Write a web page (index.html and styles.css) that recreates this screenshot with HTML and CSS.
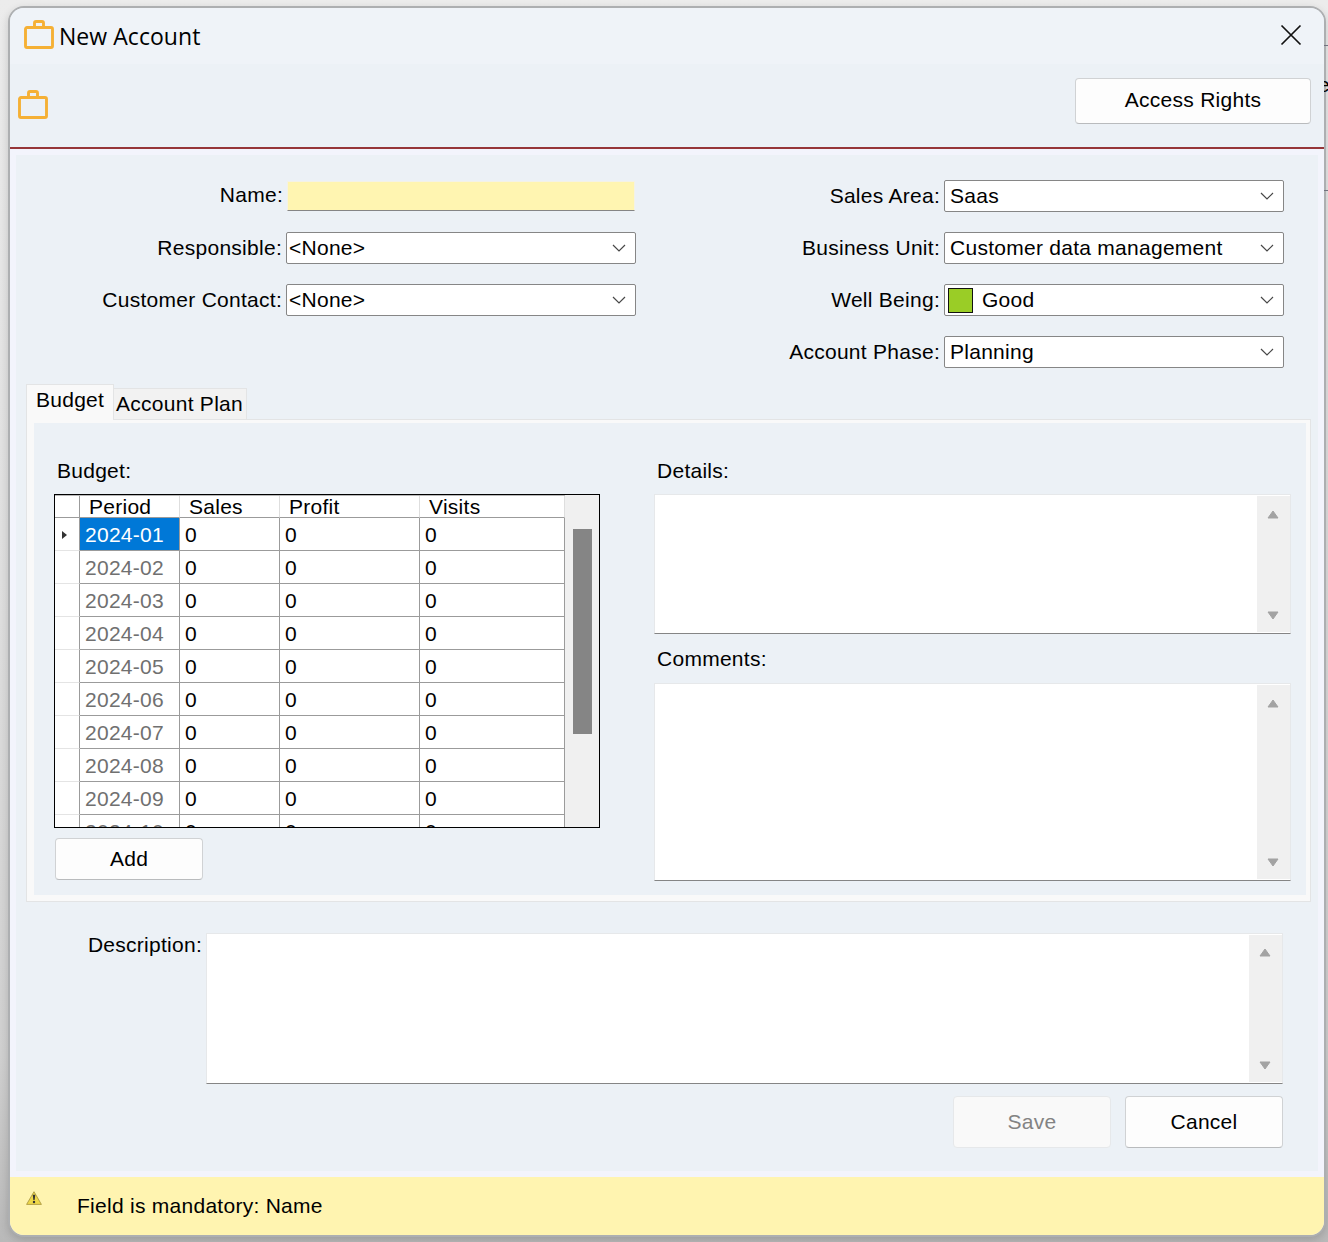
FILE: index.html
```
<!DOCTYPE html>
<html lang="en">
<head>
<meta charset="utf-8">
<title>New Account</title>
<link rel="stylesheet" href="styles.css">
</head>
<body>
<svg class="defs" width="0" height="0" aria-hidden="true">
  <symbol id="briefcase" viewBox="0 0 30 29"><path d="M3 7.500h24a1.500 1.500 0 0 1 1.500 1.500v17a1.500 1.500 0 0 1-1.500 1.500H3A1.500 1.500 0 0 1 1.500 26V9A1.500 1.500 0 0 1 3 7.500zM10.500 7.500V3A1.500 1.500 0 0 1 12 1.500h6A1.500 1.500 0 0 1 19.500 3v4.500" fill="none" stroke="#f5b035" stroke-width="2.900"/></symbol>
  <symbol id="chevron" viewBox="0 0 14 8"><path d="M1 1l6 6 6-6" fill="none" stroke="#484848" stroke-width="1.200"/></symbol>
  <symbol id="up" viewBox="0 0 12 9"><path d="M6 1l5 7H1z" fill="#a3a3a3" stroke="#a3a3a3" stroke-linejoin="round"/></symbol>
  <symbol id="down" viewBox="0 0 12 9"><path d="M6 8l5-7H1z" fill="#a3a3a3" stroke="#a3a3a3" stroke-linejoin="round"/></symbol>
</svg>
<main class="window">
  <header class="titlebar">
    <svg class="case"><use href="#briefcase"/></svg>
    <h1>New Account</h1>
    <svg class="close" viewBox="0 0 22 22"><path d="M1.500 1.500l19 19M20.500 1.500l-19 19" stroke="#111" stroke-width="1.700"/></svg>
  </header>
  <div class="toolbar">
    <svg class="case"><use href="#briefcase"/></svg>
    <button class="btn access">Access Rights</button>
  </div>
  <section class="body">
    <div class="form">
      <div class="fields left">
        <label>Name:</label><div class="name"></div>
        <label>Responsible:</label><div class="select">&lt;None&gt;<svg><use href="#chevron"/></svg></div>
        <label>Customer Contact:</label><div class="select">&lt;None&gt;<svg><use href="#chevron"/></svg></div>
      </div>
      <div class="fields right">
        <label>Sales Area:</label><div class="select">Saas<svg><use href="#chevron"/></svg></div>
        <label>Business Unit:</label><div class="select">Customer data management<svg><use href="#chevron"/></svg></div>
        <label>Well Being:</label><div class="select state"><i class="swatch"></i>Good<svg><use href="#chevron"/></svg></div>
        <label>Account Phase:</label><div class="select">Planning<svg><use href="#chevron"/></svg></div>
      </div>
    </div>
    <nav class="tabs"><div class="tab active">Budget</div><div class="tab">Account Plan</div></nav>
    <div class="panel">
      <div class="budget">
        <label>Budget:</label>
        <div class="grid">
          <div class="rows">
            <div class="row head"><b></b><span>Period</span><span>Sales</span><span>Profit</span><span>Visits</span></div>
            <div class="row current"><b><i></i></b><span>2024-01</span><span>0</span><span>0</span><span>0</span></div>
            <div class="row"><b></b><span>2024-02</span><span>0</span><span>0</span><span>0</span></div>
            <div class="row"><b></b><span>2024-03</span><span>0</span><span>0</span><span>0</span></div>
            <div class="row"><b></b><span>2024-04</span><span>0</span><span>0</span><span>0</span></div>
            <div class="row"><b></b><span>2024-05</span><span>0</span><span>0</span><span>0</span></div>
            <div class="row"><b></b><span>2024-06</span><span>0</span><span>0</span><span>0</span></div>
            <div class="row"><b></b><span>2024-07</span><span>0</span><span>0</span><span>0</span></div>
            <div class="row"><b></b><span>2024-08</span><span>0</span><span>0</span><span>0</span></div>
            <div class="row"><b></b><span>2024-09</span><span>0</span><span>0</span><span>0</span></div>
            <div class="row"><b></b><span>2024-10</span><span>0</span><span>0</span><span>0</span></div>
          </div>
          <div class="track"><div class="thumb"></div></div>
        </div>
        <button class="btn add">Add</button>
      </div>
      <div class="notes">
        <label>Details:</label>
        <div class="area details"><div class="scroll"><svg><use href="#up"/></svg><svg><use href="#down"/></svg></div></div>
        <label>Comments:</label>
        <div class="area comments"><div class="scroll"><svg><use href="#up"/></svg><svg><use href="#down"/></svg></div></div>
      </div>
    </div>
    <div class="description">
      <label>Description:</label>
      <div class="area"><div class="scroll"><svg><use href="#up"/></svg><svg><use href="#down"/></svg></div></div>
    </div>
    <div class="actions"><button class="btn" disabled>Save</button><button class="btn">Cancel</button></div>
  </section>
  <footer class="status">
    <svg viewBox="0 0 16 14"><path d="M8 .700L15.400 13.400H.600z" fill="#efd84a" stroke="#a5913a" stroke-width=".8" stroke-linejoin="round"/><path d="M6.700 3.800h2.600L8.600 9H7.400z" fill="#333"/><circle cx="8" cy="11" r="1.200" fill="#333"/></svg>
    <span>Field is mandatory: Name</span>
  </footer>
</main>
<div class="behind"><span>e</span></div>
</body>
</html>
```
FILE: styles.css
```
* { box-sizing: border-box; }
body {
  margin: 0;
  width: 1328px;
  height: 1242px;
  padding: 6px 2px 5px 8px;
  overflow: hidden;
  position: relative;
  background: linear-gradient(#ececec, #dedede 50%, #d0d0d0 85%, #b9b9b9);
  font: 21px/24px "Liberation Sans", Arial, sans-serif;
  letter-spacing: .27px;
  color: #000;
}
.defs { position: absolute; }
/* sliver of the parent window showing past the dialog's right edge */
.behind {
  position: absolute;
  right: 0;
  top: 45px;
  width: 4px;
  height: 146px;
  border: solid #72727e;
  border-width: 1px 0;
  overflow: hidden;
  padding-top: 27px;
}
.behind span { display: block; margin-left: -6px; }
.window {
  position: relative;
  width: 1318px;
  height: 1231px;
  border: 2px solid #adafb1;
  border-radius: 16px;
  overflow: hidden;
  display: flex;
  flex-direction: column;
  background: #ecf1f6;
  box-shadow: 0 3px 8px rgba(0, 0, 0, .16);
}
.titlebar {
  height: 56px;
  display: flex;
  align-items: flex-start;
  padding: 12px 22px 0 14px;
  background: #eff3f8;
}
.case { width: 30px; height: 29px; flex: none; }
h1 {
  flex: 1;
  margin: 0 0 0 5px;
  font: 23px/32px "Open Sans", "Noto Sans", sans-serif;
  letter-spacing: .05px;
}
.close { width: 22px; height: 22px; margin-top: 4px; }
.toolbar {
  height: 85px;
  display: flex;
  justify-content: space-between;
  align-items: flex-start;
  padding: 14px 13px 0 8px;
  border-bottom: 2px solid #963638;
}
.toolbar .case { margin-top: 12px; }
.btn {
  font: inherit;
  letter-spacing: inherit;
  color: #000;
  background: #fdfdfd;
  border: 1px solid #d0d2d4;
  border-bottom-color: #b9bbbd;
  border-radius: 4px;
  padding: 0;
}
.btn:disabled { color: #838383; background: #f9f9f9; border-color: #e6e8ea; }
.access { width: 236px; height: 46px; padding-bottom: 2px; }
.body { height: 1028px; border: 6px solid #f3f4fc; position: relative; }
.form { height: 229px; display: flex; justify-content: space-between; padding: 25px 34px 0 10px; }
.fields { display: grid; grid-auto-rows: 32px; row-gap: 20px; align-content: start; column-gap: 4px; }
.left { grid-template-columns: 256px 350px; }
.right { grid-template-columns: 200px 340px; }
.fields label { text-align: right; line-height: 32px; white-space: nowrap; }
.left label:first-child { line-height: 30px; margin-right: -1px; }
.name { margin: 1px 0 0 1px; height: 30px; width: 348px; background: #fff5b1; border: 1px solid #f4f2e5; border-bottom-color: #858585; }
.select {
  background: #fff;
  border: 1px solid #868686;
  border-radius: 2px;
  padding: 0 9px 0 5px;
  line-height: 30px;
  display: flex;
  align-items: center;
}
.left .select { padding-left: 2px; }
.select svg { width: 14px; height: 8px; margin-left: auto; }
.state { padding-left: 3px; }
.left .select { padding-right: 9px; }
.swatch { width: 25px; height: 25px; margin-right: 9px; background: #9acd26; border: 1px solid #111; }
.tabs { height: 35px; display: flex; align-items: flex-end; padding-left: 10px; white-space: nowrap; }
.tab { height: 31px; width: 133px; padding: 3px 0 0 2px; background: #f2f2f2; border: 1px solid #e3e4e5; border-width: 1px 1px 0 0; }
.active {
  width: 88px;
  height: 36px;
  margin-bottom: -1px;
  position: relative;
  z-index: 1;
  padding: 3px 0 0 9px;
  background: #f9f9f9;
  border-width: 1px 1px 0;
}
.panel {
  width: 1285px;
  height: 483px;
  margin-left: 10px;
  background: #ecf1f6;
  border: solid #f9f9f9;
  border-width: 4px 5px 7px 8px;
  outline: 1px solid #e3e4e5;
  outline-offset: -1px;
  display: flex;
  justify-content: space-between;
  padding: 36px 15px 0 20px;
}
.panel label { display: block; height: 35px; padding-left: 3px; }
.budget { width: 546px; }
.grid { height: 334px; border: 1px solid #000; background: #fff; display: flex; overflow: hidden; }
.rows { width: 510px; height: 332px; overflow: hidden; }
.row { display: grid; grid-template-columns: 25px 100px 100px 140px 145px; grid-template-rows: 100%; height: 33px; line-height: 33px; }
.row span { border: solid #9b9b9b; border-width: 0 1px 1px 0; padding-left: 5px; }
.row b { border-right: 1px solid #9b9b9b; border-bottom: 1px solid #e4e4e4; }
.row span:nth-child(2) { color: #707070; }
.row.head { height: 23px; line-height: 22px; border-top: 1px solid #b8b8b8; }
.row.head span { padding-left: 9px; border-right-color: #dedede; color: #000; }
.row.head b { border-bottom-color: #9b9b9b; }
.row.current span:nth-child(2) { background: #0078d7; color: #fff; }
.current i { display: block; width: 0; margin: 13px 0 0 7px; border: solid transparent; border-width: 4.5px 0 4.5px 5px; border-left-color: #333; }
.track { flex: 1; background: #f0f0f0; padding: 34px 7px 0 8px; }
.thumb { height: 205px; background: #858585; }
.add { display: block; width: 148px; height: 42px; margin: 10px 0 0 1px; }
.notes { width: 637px; }
.area { background: #fff; border: 1px solid #e6e8ea; border-bottom-color: #858585; display: flex; justify-content: flex-end; }
.details { height: 140px; }
.comments { height: 198px; }
.notes label:nth-of-type(2) { height: 49px; padding-top: 13px; }
.scroll {
  width: 33px;
  margin: 1px 0;
  background: #f0f0f0;
  display: flex;
  flex-direction: column;
  justify-content: space-between;
  align-items: center;
  padding: 14px 1px 12px 0;
}
.scroll svg { width: 12px; height: 9px; }
.description { display: flex; margin-top: 31px; padding-left: 10px; }
.description label { width: 176px; text-align: right; }
.description .area { width: 1077px; height: 151px; margin-left: 4px; }
.description .scroll { padding-top: 13px; }
.actions { display: flex; justify-content: flex-end; gap: 14px; margin: 12px 35px 0 0; }
.actions .btn { width: 158px; height: 52px; }
.status { flex: 1; background: #fff4b0; display: flex; align-items: flex-start; padding: 14px 0 0 16px; }
.status svg { width: 16px; height: 14px; }
.status span { margin: 3px 0 0 35px; }
```
